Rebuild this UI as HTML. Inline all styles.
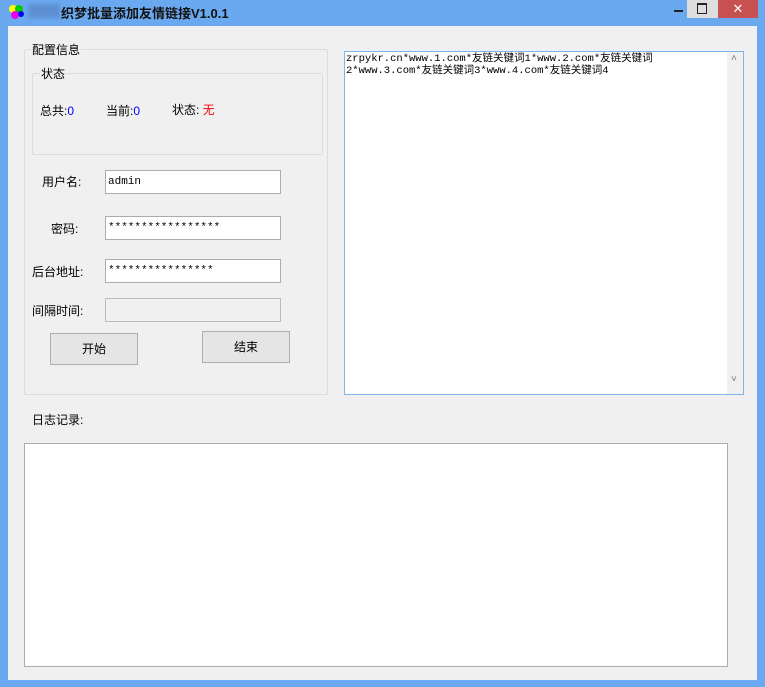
<!DOCTYPE html>
<html><head><meta charset="utf-8"><style>
body{margin:0;width:765px;height:687px;background:#6aa9f0;font-family:"Liberation Sans","Noto Sans CJK SC",sans-serif;font-size:12px;color:#000;position:relative;overflow:hidden}
.a{position:absolute}
.client{left:8px;top:26px;width:749px;height:654px;background:#f0f0f0}
.grp{border:1px solid #dcdcdc;border-radius:2px}
.lbl{background:#f0f0f0;padding:0 1px;font-size:12px}
.inp{background:#fff;border:1px solid #acacac;box-sizing:border-box;height:24px;font-family:"Liberation Mono",monospace;font-size:11px;line-height:22px;padding-left:2px}
.btn{background:#e5e5e5;border:1px solid #adadad;box-sizing:border-box;text-align:center;line-height:31px}
</style></head><body>
<div class="a" style="left:9px;top:5px;width:8px;height:8px;border-radius:50%;background:#ff0"></div>
<div class="a" style="left:15px;top:5px;width:8px;height:8px;border-radius:50%;background:#0c0"></div>
<div class="a" style="left:11px;top:11px;width:8px;height:8px;border-radius:50%;background:#e0e"></div>
<div class="a" style="left:18px;top:11px;width:6px;height:6px;border-radius:50%;background:#00f"></div>
<div class="a" style="left:28px;top:4px;width:32px;height:14px;background:#5d8fd0;filter:blur(2px)"></div>
<div class="a" style="left:61px;top:3px;font-size:13px;font-weight:bold;color:#111">织梦批量添加友情链接V1.0.1</div>
<div class="a" style="left:674px;top:10px;width:9px;height:2px;background:#222"></div>
<div class="a" style="left:687px;top:0;width:31px;height:18px;background:#dedede"></div>
<div class="a" style="left:697px;top:3px;width:8px;height:8px;border:1px solid #222;border-top-width:2px"></div>
<div class="a" style="left:718px;top:0;width:40px;height:18px;background:#c75050;color:#fff;text-align:center;font-size:13px;line-height:18px">✕</div>
<div class="a client"></div>
<div class="a grp" style="left:24px;top:49px;width:302px;height:344px"></div>
<div class="a lbl" style="left:31px;top:41px">配置信息</div>
<div class="a grp" style="left:32px;top:73px;width:289px;height:80px"></div>
<div class="a lbl" style="left:40px;top:65px">状态</div>
<div class="a" style="left:40px;top:102px">总共:<span style="color:#00f">0</span></div>
<div class="a" style="left:106px;top:102px">当前:<span style="color:#00f">0</span></div>
<div class="a" style="left:172px;top:101px">状态: <span style="color:#f00">无</span></div>
<div class="a" style="left:42px;top:173px">用户名:</div>
<div class="a inp" style="left:105px;top:170px;width:176px">admin</div>
<div class="a" style="left:51px;top:220px">密码:</div>
<div class="a inp" style="left:105px;top:216px;width:176px">*****************</div>
<div class="a" style="left:32px;top:263px">后台地址:</div>
<div class="a inp" style="left:105px;top:259px;width:176px">****************</div>
<div class="a" style="left:32px;top:302px">间隔时间:</div>
<div class="a inp" style="left:105px;top:298px;width:176px;background:#f0f0f0;border-color:#bbb"></div>
<div class="a btn" style="left:50px;top:333px;width:88px;height:32px">开始</div>
<div class="a btn" style="left:202px;top:331px;width:88px;height:32px">结束</div>
<div class="a" style="left:344px;top:51px;width:400px;height:344px;background:#fff;border:1px solid #7eb4ea;box-sizing:border-box"></div>
<div class="a" style="left:727px;top:52px;width:16px;height:342px;background:#f0f0f0"></div>
<div class="a" style="left:731px;top:53px;color:#777;font-size:10px">˄</div>
<div class="a" style="left:731px;top:374px;color:#777;font-size:10px">˅</div>
<div class="a" style="left:346px;top:53px;font-family:'Liberation Mono','Noto Sans CJK SC',monospace;font-size:10.5px;line-height:12px;width:380px;white-space:pre">zrpykr.cn*www.1.com*友链关键词1*www.2.com*友链关键词
2*www.3.com*友链关键词3*www.4.com*友链关键词4</div>
<div class="a" style="left:32px;top:411px">日志记录:</div>
<div class="a" style="left:24px;top:443px;width:704px;height:224px;background:#fff;border:1px solid #acacac;box-sizing:border-box"></div>
</body></html>
